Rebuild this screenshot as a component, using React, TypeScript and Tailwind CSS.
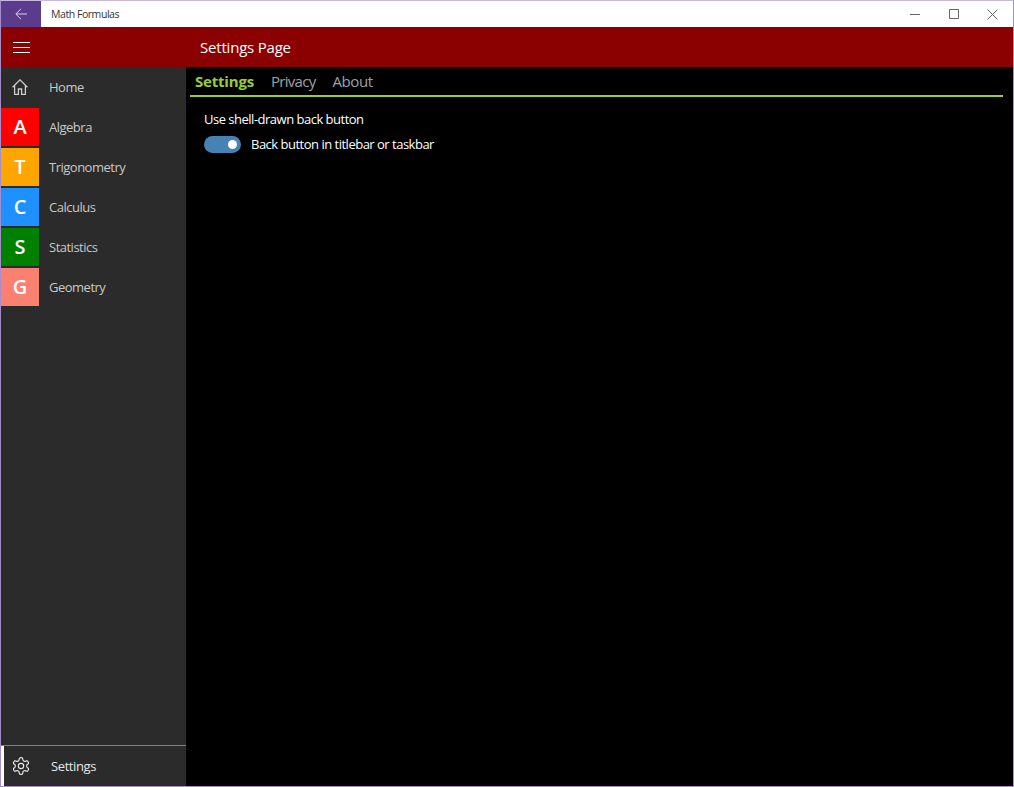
import React from "react";

const items = [
  { l: "A", c: "bg-[#ff0000]", n: "Algebra" },
  { l: "T", c: "bg-[#ffa500]", n: "Trigonometry" },
  { l: "C", c: "bg-[#1e90ff]", n: "Calculus" },
  { l: "S", c: "bg-[#008000]", n: "Statistics" },
  { l: "G", c: "bg-[#fa8072]", n: "Geometry" },
];

export default function App() {
  return (
    <div className="w-[1014px] h-[787px] overflow-hidden flex flex-col border border-[#a58fcb] border-t-[#c9b8e0] bg-black font-['Open_Sans','Noto_Sans',sans-serif]">
      <div className="h-[26px] flex items-center bg-white shrink-0">
        <div className="w-[40px] h-full bg-[#5b3c8c] flex items-center justify-center">
          <svg width="12" height="12" viewBox="0 0 12 12" fill="none" stroke="#d9cfe8" strokeWidth="1">
            <path d="M12 6H1M6 .8L.8 6 6 11.2" />
          </svg>
        </div>
        <span className="ml-[10px] text-[10.5px] tracking-[-0.45px] text-[#333] pt-[1px]">Math Formulas</span>
        <div className="ml-auto flex items-center h-full">
          <div className="w-[39px] flex justify-center">
            <svg width="10" height="10" viewBox="0 0 10 10" stroke="#666" fill="none"><path d="M0 5.5h10" /></svg>
          </div>
          <div className="w-[39px] flex justify-center">
            <svg width="10" height="10" viewBox="0 0 10 10" stroke="#666" fill="none"><path d="M.5.5h9v9h-9z" /></svg>
          </div>
          <div className="w-[39px] flex justify-center mr-[1px]">
            <svg width="11" height="11" viewBox="0 0 11 11" stroke="#666" fill="none"><path d="M.5.5l10 10M10.5.5l-10 10" /></svg>
          </div>
        </div>
      </div>
      <div className="h-[40px] bg-[#8b0000] flex items-center shrink-0">
        <div className="w-[40px] flex justify-center">
          <svg width="17" height="11" viewBox="0 0 17 11" stroke="#ffffff" strokeWidth="1" fill="none">
            <path d="M0 .5h17M0 5.5h17M0 10.5h17" />
          </svg>
        </div>
        <span className="ml-[159px] text-[15px] tracking-[-0.2px] text-white">Settings Page</span>
      </div>
      <div className="flex flex-1 min-h-0">
        <div className="w-[185px] bg-[#2b2b2b] flex flex-col shrink-0">
          <div className="h-[40px] flex items-center">
            <div className="w-[38px] flex justify-center">
              <svg width="16" height="16" viewBox="0 0 16 16" fill="none" stroke="#ccc" strokeWidth="1.3">
                <path d="M.6 8.2L8 .9l7.4 7.3M2.6 6.5v8.9h3.8v-5.4h3.2v5.4h3.8V6.5" />
              </svg>
            </div>
            <span className="ml-[10px] text-[13px] tracking-[-0.5px] text-[#c8c8c8] pt-[1px]">Home</span>
          </div>
          {items.map((it) => (
            <div key={it.n} className="h-[40px] flex items-center">
              <div className={`w-[38px] h-[38px] ${it.c} flex items-center justify-center text-[20px] font-semibold text-white`}>
                {it.l}
              </div>
              <span className="ml-[10px] text-[13px] tracking-[-0.5px] text-[#c8c8c8] pt-[1px]">{it.n}</span>
            </div>
          ))}
          <div className="mt-auto h-[41px] border-t border-[#808080] flex items-center relative">
            <div className="absolute left-0 top-0 bottom-0 w-[3px] bg-white" />
            <svg className="ml-[10px] shrink-0" width="20" height="20" viewBox="0 0 24 24" fill="none" stroke="#e6e6e6" strokeWidth="1.4" strokeLinejoin="round">
              <path d="M12.2 2h-.4a2 2 0 0 0-2 2v.2a2 2 0 0 1-1 1.7l-.4.3a2 2 0 0 1-2 0l-.2-.1a2 2 0 0 0-2.7.7l-.2.4a2 2 0 0 0 .7 2.7l.2.1a2 2 0 0 1 1 1.7v.6a2 2 0 0 1-1 1.7l-.2.1a2 2 0 0 0-.7 2.7l.2.4a2 2 0 0 0 2.7.7l.2-.1a2 2 0 0 1 2 0l.4.3a2 2 0 0 1 1 1.7v.2a2 2 0 0 0 2 2h.4a2 2 0 0 0 2-2v-.2a2 2 0 0 1 1-1.7l.4-.3a2 2 0 0 1 2 0l.2.1a2 2 0 0 0 2.7-.7l.2-.4a2 2 0 0 0-.7-2.7l-.2-.1a2 2 0 0 1-1-1.7v-.6a2 2 0 0 1 1-1.7l.2-.1a2 2 0 0 0 .7-2.7l-.2-.4a2 2 0 0 0-2.7-.7l-.2.1a2 2 0 0 1-2 0l-.4-.3a2 2 0 0 1-1-1.7V4a2 2 0 0 0-2-2z" />
              <circle cx="12" cy="12" r="3.2" />
            </svg>
            <span className="ml-[20px] text-[13px] tracking-[-0.4px] text-[#e6e6e6] pt-[1px]">Settings</span>
          </div>
        </div>
        <div className="flex-1 min-w-0 pl-[4px] pr-[10px] text-white">
          <div className="h-[30px] border-b-2 border-[#9acd32] flex items-center pl-[5px] gap-[17px] text-[15px] pt-[1px]">
            <span className="font-bold tracking-[-0.2px] text-[#9acd32]">Settings</span>
            <span className="tracking-[-0.7px] text-[#a0a0a0]">Privacy</span>
            <span className="tracking-[-0.4px] text-[#a0a0a0]">About</span>
          </div>
          <div className="pl-[14px] pt-[13px] text-[13px] tracking-[-0.5px]">
            <div className="leading-[18px]">Use shell-drawn back button</div>
            <div className="mt-[7px] flex items-center">
              <div className="w-[37px] h-[17px] rounded-full bg-[#4682b4] flex items-center justify-end pr-[4px]">
                <div className="w-[9px] h-[9px] rounded-full bg-white" />
              </div>
              <span className="ml-[10px]">Back button in titlebar or taskbar</span>
            </div>
          </div>
        </div>
      </div>
    </div>
  );
}
